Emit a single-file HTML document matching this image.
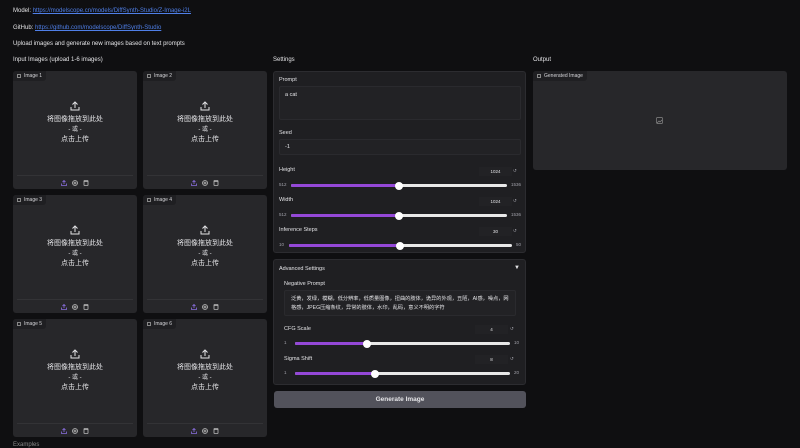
<!DOCTYPE html>
<html><head><meta charset="utf-8"><style>
*{box-sizing:border-box;margin:0;padding:0}
body{width:800px;height:446px;background:#0f0f11;color:#e4e4e7;font-family:"Liberation Sans","Noto Sans CJK SC",sans-serif;font-size:6px;position:relative;overflow:hidden}
.a{position:absolute}
a{color:#4f7fe8;text-decoration:underline}
.box{position:absolute;background:#27272a;border-radius:3px}
.tag{position:absolute;left:0;top:0;height:10px;padding:0 4px 0 4px;background:#1f1f22;border-radius:3px 0 3px 0;font-size:5px;line-height:10px;color:#d4d4d8}
.tag i{display:inline-block;width:4px;height:4px;border:1px solid #888;margin-right:3px;vertical-align:-0.5px}
.up{position:absolute;left:0;right:0;text-align:center;color:#e4e4e7;font-size:7px;line-height:10px}
.foot{position:absolute;left:4px;right:4px;bottom:0;height:14px;border-top:1px solid #333336}
.ic{position:absolute;top:4px;width:6px;height:6px}
.panel{position:absolute;background:#1f1f22;border:1px solid #2c2c30;border-radius:3px}
.lbl{position:absolute;font-size:5.5px;color:#e4e4e7}
.inp{position:absolute;background:#222225;border:1px solid #2a2a2e;border-radius:2px;font-size:5.5px;color:#e4e4e7}
.trk{position:absolute;height:3px;border-radius:2px;background:#e8e8e8}
.fill{position:absolute;left:0;top:0;height:3px;background:#9448d8;border-radius:2px}
.th{position:absolute;top:-2.5px;width:8px;height:8px;border-radius:50%;background:#fff;margin-left:-4px}
.num{position:absolute;font-size:4.5px;color:#a1a1aa}
.nb{position:absolute;height:9px;background:#222225;font-size:4.5px;color:#e4e4e7;text-align:center;line-height:9px}
</style></head><body>
<div class="a" style="left:13px;top:8px">Model: <a>https://modelscope.cn/models/DiffSynth-Studio/Z-Image-i2L</a></div>
<div class="a" style="left:13px;top:25px">GitHub: <a>https://github.com/modelscope/DiffSynth-Studio</a></div>
<div class="a" style="left:13px;top:41px">Upload images and generate new images based on text prompts</div>
<div class="a" style="left:13px;top:57px">Input Images (upload 1-6 images)</div>
<div class="a" style="left:273px;top:57px">Settings</div>
<div class="a" style="left:533px;top:57px">Output</div>

<div id="boxes"></div>
<script>
var pos=[[13,71],[143,71],[13,195],[143,195],[13,319],[143,319]];
var h='';
pos.forEach(function(p,i){
h+='<div class="box" style="left:'+p[0]+'px;top:'+p[1]+'px;width:124px;height:118px">'+
'<div class="tag"><i></i>Image '+(i+1)+'</div>'+
'<svg class="a" style="left:57px;top:30px" width="10" height="10" viewBox="0 0 10 10" fill="none" stroke="#e4e4e7" stroke-width="1"><path d="M5 7V1M2.5 3.5L5 1l2.5 2.5M1 6v3h8V6"/></svg>'+
'<div class="up" style="top:44px">将图像拖放到此处</div>'+
'<div class="up" style="top:54px;font-size:6px">- 或 -</div>'+
'<div class="up" style="top:64px">点击上传</div>'+
'<div class="foot">'+
'<svg class="ic" style="left:44px" viewBox="0 0 6 6" fill="none" stroke="#8b6fe0" stroke-width="0.8"><path d="M3 4V0.5M1.5 2L3 0.5 4.5 2M0.5 3.5v2h5v-2"/></svg>'+
'<svg class="ic" style="left:55px" viewBox="0 0 6 6" fill="none" stroke="#bbb" stroke-width="0.8"><circle cx="3" cy="3" r="2.5"/><circle cx="3" cy="3" r="1"/></svg>'+
'<svg class="ic" style="left:66px" viewBox="0 0 6 6" fill="none" stroke="#bbb" stroke-width="0.8"><rect x="1" y="0.5" width="4" height="5" rx="0.5"/><path d="M1 1.5h4"/></svg>'+
'</div></div>';
});
document.getElementById('boxes').innerHTML=h;
</script>

<div class="panel" style="left:273px;top:71px;width:253px;height:182px">
 <div class="lbl" style="left:5px;top:5px">Prompt</div>
 <div class="inp" style="left:5px;top:14px;width:242px;height:34px;padding:5px 5px">a cat</div>
 <div class="lbl" style="left:5px;top:58px">Seed</div>
 <div class="inp" style="left:5px;top:67px;width:242px;height:16px;padding:4px 5px">-1</div>
 <div class="lbl" style="left:5px;top:95px">Height</div>
 <div class="nb" style="left:205px;top:95px;width:33px">1024</div><div class="num" style="left:239px;top:96px">↺</div>
 <div class="num" style="left:5px;top:110px">512</div>
 <div class="trk" style="left:17px;top:112px;width:216px"><div class="fill" style="width:108px"></div><div class="th" style="left:108px"></div></div>
 <div class="num" style="left:237px;top:110px">1536</div>
 <div class="lbl" style="left:5px;top:125px">Width</div>
 <div class="nb" style="left:205px;top:125px;width:33px">1024</div><div class="num" style="left:239px;top:126px">↺</div>
 <div class="num" style="left:5px;top:140px">512</div>
 <div class="trk" style="left:17px;top:142px;width:216px"><div class="fill" style="width:108px"></div><div class="th" style="left:108px"></div></div>
 <div class="num" style="left:237px;top:140px">1536</div>
 <div class="lbl" style="left:5px;top:155px">Inference Steps</div>
 <div class="nb" style="left:205px;top:155px;width:33px">30</div><div class="num" style="left:239px;top:156px">↺</div>
 <div class="num" style="left:5px;top:170px">10</div>
 <div class="trk" style="left:15px;top:172px;width:223px"><div class="fill" style="width:111px"></div><div class="th" style="left:111px"></div></div>
 <div class="num" style="left:242px;top:170px">50</div>
</div>

<div class="panel" style="left:273px;top:259px;width:253px;height:126px">
 <div class="lbl" style="left:5px;top:6px">Advanced Settings</div>
 <div class="a" style="left:240px;top:5px;font-size:6px">▼</div>
 <div class="lbl" style="left:10px;top:21px">Negative Prompt</div>
 <div class="inp" style="left:10px;top:30px;width:232px;height:26px;padding:4px 6px;font-size:5.2px;line-height:9px">泛黄，发绿，模糊，低分辨率，低质量图像，扭曲的肢体，诡异的外观，丑陋，AI感，噪点，网格感，JPEG压缩条纹，异常的肢体，水印，乱码，意义不明的字符</div>
 <div class="lbl" style="left:10px;top:66px">CFG Scale</div>
 <div class="nb" style="left:201px;top:65px;width:33px">4</div><div class="num" style="left:236px;top:66px">↺</div>
 <div class="num" style="left:10px;top:80px">1</div>
 <div class="trk" style="left:21px;top:82px;width:215px"><div class="fill" style="width:72px"></div><div class="th" style="left:72px"></div></div>
 <div class="num" style="left:240px;top:80px">10</div>
 <div class="lbl" style="left:10px;top:96px">Sigma Shift</div>
 <div class="nb" style="left:201px;top:95px;width:33px">8</div><div class="num" style="left:236px;top:96px">↺</div>
 <div class="num" style="left:10px;top:110px">1</div>
 <div class="trk" style="left:21px;top:112px;width:215px"><div class="fill" style="width:80px"></div><div class="th" style="left:80px"></div></div>
 <div class="num" style="left:240px;top:110px">20</div>
</div>
<div class="a" style="left:274px;top:391px;width:252px;height:17px;background:#52525b;border-radius:3px;text-align:center;line-height:17px;font-size:6.5px;font-weight:bold;color:#e4e4e7">Generate Image</div>

<div class="box" style="left:533px;top:71px;width:254px;height:99px">
 <div class="tag"><i></i>Generated Image</div>
 <svg class="a" style="left:123px;top:46px" width="7" height="7" viewBox="0 0 7 7" fill="none" stroke="#888" stroke-width="0.7"><rect x="0.5" y="0.5" width="6" height="6" rx="1"/><path d="M1 6l2-2 1 1 2-2"/></svg>
</div>
<div class="a" style="left:13px;top:442px;font-size:6px;color:#888">Examples</div>
</body></html>
